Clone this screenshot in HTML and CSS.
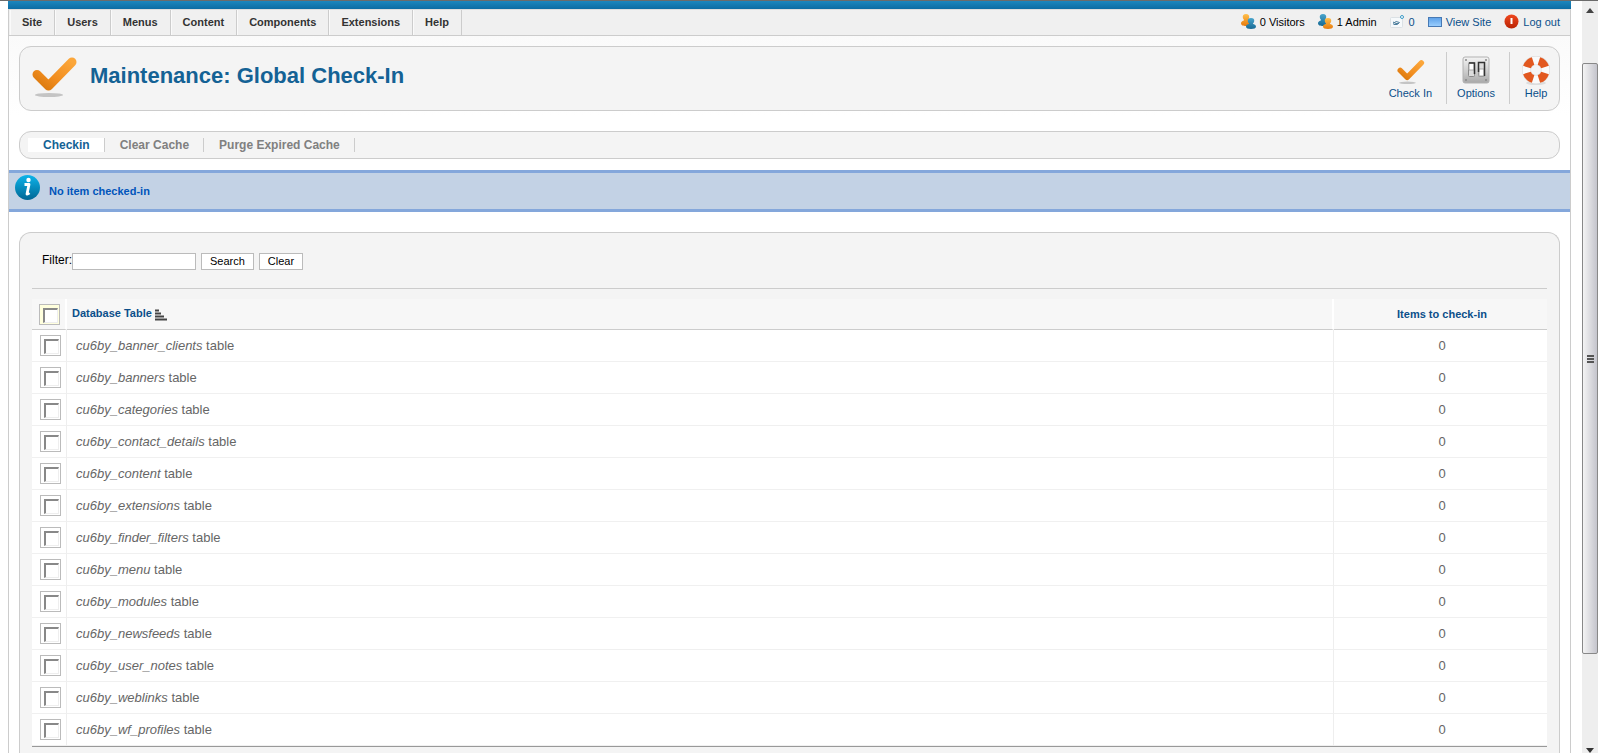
FILE: index.html
```html
<!DOCTYPE html>
<html lang="en">
<head>
  <meta charset="UTF-8">
  <meta name="viewport" content="width=device-width, initial-scale=1.0">
  <title>Maintenance: Global Check-In</title>
  <link rel="stylesheet" href="styles.css">
</head>
<body>

  <!-- Shared icon shapes -->
  <svg class="defs" width="0" height="0" aria-hidden="true">
    <defs>
      <linearGradient id="orange" x1="0" y1="1" x2="1" y2="0">
        <stop offset="0" stop-color="#d9780c"/>
        <stop offset="0.4" stop-color="#f18d1f"/>
        <stop offset="1" stop-color="#fba63a"/>
      </linearGradient>
      <linearGradient id="gold" x1="0" y1="0" x2="0" y2="1">
        <stop offset="0" stop-color="#ffc04d"/>
        <stop offset="1" stop-color="#e87b0c"/>
      </linearGradient>
      <linearGradient id="teal" x1="0" y1="0" x2="0" y2="1">
        <stop offset="0" stop-color="#4aa5cc"/>
        <stop offset="1" stop-color="#176a94"/>
      </linearGradient>
      <linearGradient id="infoBlue" x1="0" y1="0" x2="0" y2="1">
        <stop offset="0" stop-color="#0cb4ea"/>
        <stop offset="1" stop-color="#006694"/>
      </linearGradient>
      <linearGradient id="metal" x1="0" y1="0" x2="0" y2="1">
        <stop offset="0" stop-color="#f4f4f4"/>
        <stop offset="0.6" stop-color="#c9c9c9"/>
        <stop offset="1" stop-color="#a8a8a8"/>
      </linearGradient>
      <linearGradient id="screen" x1="0" y1="0" x2="0" y2="1">
        <stop offset="0" stop-color="#5b9fe8"/>
        <stop offset="1" stop-color="#9dd0ff"/>
      </linearGradient>
      <linearGradient id="red" x1="0" y1="0" x2="0" y2="1">
        <stop offset="0" stop-color="#f0481f"/>
        <stop offset="1" stop-color="#b92304"/>
      </linearGradient>
      <symbol id="check" viewBox="0 0 48 48">
        <ellipse cx="19" cy="41" rx="14" ry="2" fill="#c4c4c4"/>
        <path d="M7 20.500L18.500 32L42 8" fill="none" stroke="url(#orange)" stroke-width="9" stroke-linecap="round" stroke-linejoin="round"/>
      </symbol>
      <symbol id="person" viewBox="0 0 9 12" preserveAspectRatio="none">
        <path d="M4.500 0C6.700 0 7.600 1.400 7.400 3.200C7.300 4.400 6.900 5.200 6.200 5.900C6.200 6.800 9 6.800 9 9.300C9 11.500 7 12 4.500 12S0 11.500 0 9.300C0 6.800 2.800 6.800 2.800 5.900C2.100 5.200 1.700 4.400 1.600 3.200C1.400 1.400 2.300 0 4.500 0Z"/>
      </symbol>
    </defs>
  </svg>

  <div class="page">
    <div class="top-bar"></div>

    <header class="menu-bar">
      <nav class="menu">
        <a href="#">Site</a>
        <a href="#">Users</a>
        <a href="#">Menus</a>
        <a href="#">Content</a>
        <a href="#">Components</a>
        <a href="#">Extensions</a>
        <a href="#">Help</a>
      </nav>
      <div class="status">
        <span>
          <svg width="15" height="15" viewBox="0 0 15 15"><use href="#person" x="0" y="0" width="10" height="12" fill="url(#gold)"/><use href="#person" x="5" y="4" width="10" height="11" fill="url(#teal)"/></svg>
          0 Visitors
        </span>
        <span>
          <svg width="15" height="15" viewBox="0 0 15 15"><use href="#person" x="0" y="0" width="10" height="12" fill="url(#teal)"/><use href="#person" x="5" y="4" width="10" height="11" fill="url(#gold)"/></svg>
          1 Admin
        </span>
        <a href="#">
          <svg width="15" height="15" viewBox="0 0 15 15"><rect x="0.500" y="3.500" width="12" height="10" rx="1" fill="#f6f9fb" stroke="#dbe1e5"/><path d="M3 9.500Q6 6 9.500 8.500Q8 11.500 3.500 10.500M3 8L6 9.500H9" fill="none" stroke="#4e7f9e"/><circle cx="12" cy="3" r="1.500" fill="#fff" stroke="#3c9ac6"/></svg>
          0
        </a>
        <a href="#">
          <svg width="14" height="15" viewBox="0 0 14 15"><rect x="0.500" y="3.500" width="13" height="9" fill="url(#screen)" stroke="#4779b4"/></svg>
          View Site
        </a>
        <a href="#">
          <svg width="15" height="15" viewBox="0 0 15 15"><circle cx="7.500" cy="7.500" r="7" fill="url(#red)"/><path d="M7.500 4V10" stroke="#fff" stroke-width="2"/></svg>
          Log out
        </a>
      </div>
    </header>

    <main>
      <section class="box title-box">
        <svg width="48" height="48"><use href="#check"/></svg>
        <h1>Maintenance: Global Check-In</h1>
        <div class="toolbar">
          <a href="#">
            <svg width="32" height="32" viewBox="0 0 32 32"><use href="#check" x="2" y="4" width="29" height="29"/></svg>
            Check In
          </a>
          <a href="#">
            <svg width="32" height="32" viewBox="0 0 32 32">
              <rect x="3" y="3" width="26" height="26" rx="2" fill="url(#metal)" stroke="#b2b2b2"/>
              <g fill="#888"><circle cx="6" cy="6" r="1"/><circle cx="26" cy="6" r="1"/><circle cx="6" cy="26" r="1"/><circle cx="26" cy="26" r="1"/></g>
              <rect x="8.500" y="8.500" width="6" height="14" rx="1" fill="#ddd" stroke="#888"/>
              <rect x="18.500" y="8.500" width="6" height="14" rx="1" fill="#ddd" stroke="#888"/>
              <path d="M9 16H14V9H9Z" fill="#fff" stroke="#aaa"/>
              <path d="M19 15H24V22H19Z" fill="#fff" stroke="#aaa"/>
              <path d="M9 9H14.500V20M18.500 18V8.500H24.500V22" fill="none" stroke="#333" stroke-width="1.500"/>
            </svg>
            Options
          </a>
          <a href="#">
            <svg width="32" height="32" viewBox="0 0 32 32">
              <ellipse cx="16" cy="29" rx="10" ry="2" fill="#ddd"/>
              <circle cx="16" cy="16" r="9.500" fill="none" stroke="#d5d5d5" stroke-width="9"/>
              <circle cx="16" cy="16" r="9.500" fill="none" stroke="#fafafa" stroke-width="8"/>
              <circle cx="16" cy="16" r="9.500" fill="none" stroke="#e2581f" stroke-width="8" pathLength="80" stroke-dasharray="12 8" stroke-dashoffset="-4"/>
            </svg>
            Help
          </a>
        </div>
      </section>

      <nav class="box submenu">
        <a href="#" class="active">Checkin</a>
        <a href="#">Clear Cache</a>
        <a href="#">Purge Expired Cache</a>
      </nav>

      <div class="message">
        <svg width="25" height="25" viewBox="0 0 25 25"><circle cx="12.500" cy="12.500" r="12.500" fill="url(#infoBlue)"/><circle cx="13.500" cy="5" r="2.200" fill="#fff"/><path d="M9.500 9.500H14L12 19Q12.500 19.500 14.500 18" fill="none" stroke="#fff" stroke-width="2.800" stroke-linejoin="round"/></svg>
        <p>No item checked-in</p>
      </div>

      <form class="box content">
        <div class="filter">
          <label for="filter_search">Filter:</label>
          <input type="text" id="filter_search">
          <button type="button">Search</button>
          <button type="button">Clear</button>
        </div>

        <table class="adminlist">
          <thead>
            <tr>
              <th class="tick"><input type="checkbox" aria-label="Check all"></th>
              <th class="name"><a href="#">Database Table <svg width="12" height="12" viewBox="0 0 12 12"><path d="M0 1.500H4M0 4.500H6M0 7.500H9M0 10.500H12" stroke="#444" stroke-width="2"/></svg></a></th>
              <th class="count"><a href="#">Items to check-in</a></th>
            </tr>
          </thead>
          <tbody>
            <tr><td class="tick"><input type="checkbox" id="cb0"></td><td><label for="cb0"><em>cu6by_banner_clients</em> table</label></td><td class="count">0</td></tr>
            <tr><td class="tick"><input type="checkbox" id="cb1"></td><td><label for="cb1"><em>cu6by_banners</em> table</label></td><td class="count">0</td></tr>
            <tr><td class="tick"><input type="checkbox" id="cb2"></td><td><label for="cb2"><em>cu6by_categories</em> table</label></td><td class="count">0</td></tr>
            <tr><td class="tick"><input type="checkbox" id="cb3"></td><td><label for="cb3"><em>cu6by_contact_details</em> table</label></td><td class="count">0</td></tr>
            <tr><td class="tick"><input type="checkbox" id="cb4"></td><td><label for="cb4"><em>cu6by_content</em> table</label></td><td class="count">0</td></tr>
            <tr><td class="tick"><input type="checkbox" id="cb5"></td><td><label for="cb5"><em>cu6by_extensions</em> table</label></td><td class="count">0</td></tr>
            <tr><td class="tick"><input type="checkbox" id="cb6"></td><td><label for="cb6"><em>cu6by_finder_filters</em> table</label></td><td class="count">0</td></tr>
            <tr><td class="tick"><input type="checkbox" id="cb7"></td><td><label for="cb7"><em>cu6by_menu</em> table</label></td><td class="count">0</td></tr>
            <tr><td class="tick"><input type="checkbox" id="cb8"></td><td><label for="cb8"><em>cu6by_modules</em> table</label></td><td class="count">0</td></tr>
            <tr><td class="tick"><input type="checkbox" id="cb9"></td><td><label for="cb9"><em>cu6by_newsfeeds</em> table</label></td><td class="count">0</td></tr>
            <tr><td class="tick"><input type="checkbox" id="cb10"></td><td><label for="cb10"><em>cu6by_user_notes</em> table</label></td><td class="count">0</td></tr>
            <tr><td class="tick"><input type="checkbox" id="cb11"></td><td><label for="cb11"><em>cu6by_weblinks</em> table</label></td><td class="count">0</td></tr>
            <tr><td class="tick"><input type="checkbox" id="cb12"></td><td><label for="cb12"><em>cu6by_wf_profiles</em> table</label></td><td class="count">0</td></tr>
          </tbody>
        </table>
      </form>
    </main>
  </div>

  <!-- Window scrollbar -->
  <div class="scrollbar" aria-hidden="true">
    <svg width="8" height="5" viewBox="0 0 8 5"><path d="M4 0L8 5H0Z" fill="#444"/></svg>
    <div class="scroll-track"><div class="scroll-thumb"><i></i><i></i><i></i></div></div>
    <svg width="8" height="5" viewBox="0 0 8 5"><path d="M0 0H8L4 5Z" fill="#333"/></svg>
  </div>

</body>
</html>
```

FILE: styles.css
```css
* {
  box-sizing: border-box;
  margin: 0;
  padding: 0;
}

body {
  display: flex;
  height: 100vh;
  overflow: hidden;
  border-top: 1px solid #6b6b6b;
  padding-left: 8px;
  background: #fff;
  color: #000;
  font-family: "Liberation Sans", Arial, Helvetica, sans-serif;
  font-size: 11px;
}

a {
  color: #0b4f8a;
  text-decoration: none;
}

svg {
  flex-shrink: 0;
}

.defs {
  position: absolute;
}

.page {
  flex: 1;
  min-width: 0;
}

.top-bar {
  height: 8px;
  background: linear-gradient(#1c86bd, #0c6ca3);
}

/* Main menu and status */
.menu-bar {
  display: flex;
  justify-content: space-between;
  height: 27px;
  border: 1px solid #ccc;
  border-top-color: #ddd;
  background: #f0f0f0;
}

.menu {
  display: flex;
  padding-left: 1px;
}

.menu a {
  padding: 0 12px;
  border-right: 1px solid #ccc;
  box-shadow: inset 1px 0 #fafafa;
  color: #333;
  font-weight: bold;
  line-height: 24px;
}

.status {
  display: flex;
  align-items: center;
  gap: 13px;
  padding: 0 10px 2px 0;
}

.status span,
.status a {
  display: flex;
  align-items: center;
  gap: 4px;
}

main {
  border: solid #ccc;
  border-width: 0 1px;
  background: linear-gradient(#fafafa, #fff 80px);
  padding-top: 10px;
}

.box {
  margin: 0 10px;
  border: 1px solid #ccc;
  border-radius: 12px;
  background: #f4f4f4;
}

/* Page title and toolbar */
.title-box {
  display: flex;
  align-items: center;
  height: 65px;
  padding: 0 0 2px 10px;
}

.title-box h1 {
  flex: 1;
  padding: 0 0 4px 12px;
  color: #146295;
  font-size: 22px;
}

.toolbar {
  display: flex;
}

.toolbar a {
  display: flex;
  flex-direction: column;
  align-items: center;
  height: 52px;
  padding: 2px 14px 0 10px;
  border-right: 1px solid #ccc;
  line-height: 14px;
}

.toolbar a:last-child {
  padding-right: 7px;
  border-right: 0;
}

.submenu {
  display: flex;
  margin-top: 20px;
  padding: 6px 8px;
}

.submenu a {
  padding: 0 14px 0 15px;
  border-right: 1px solid #ccc;
  color: #808080;
  font-size: 12px;
  font-weight: bold;
  line-height: 14px;
}

.submenu .active {
  background: #fff;
  color: #146295;
}

/* System message */
.message {
  display: flex;
  gap: 9px;
  height: 42px;
  margin: 11px 0 20px;
  padding: 2px 6px;
  border: solid #84a7db;
  border-width: 3px 0;
  background: #c3d2e5;
  color: #05b;
  font-weight: bold;
  line-height: 32px;
}

.content {
  padding: 20px 12px 30px;
  border-bottom: 0;
  border-radius: 12px 12px 0 0;
}

.filter {
  display: flex;
  height: 36px;
  padding-left: 10px;
  border-bottom: 1px solid #ccc;
}

.filter label {
  font-size: 12px;
  line-height: 14px;
}

.filter input,
.filter button {
  height: 17px;
  border: 1px solid #bbb;
  background: #fff;
  font: 11px "Liberation Sans", Arial, sans-serif;
}

.filter input {
  width: 124px;
}

.filter button {
  margin-left: 5px;
  padding: 0 8px 1px;
}

/* Table list */
.adminlist {
  width: 100%;
  margin-top: 10px;
  border-collapse: separate;
  border-spacing: 0;
  border-bottom: 1px solid #999;
  background: #fff;
  color: #666;
  font-size: 13px;
}

.adminlist th {
  height: 31px;
  border-right: 2px solid #fff;
  border-bottom: 1px solid #ccc;
  background: #f7f7f7;
  font-size: 11px;
}

.adminlist td {
  height: 32px;
  padding-left: 9px;
  border-right: 1px solid #eee;
  border-bottom: 1px solid #f0f0f0;
}

.adminlist th:last-child,
.adminlist td:last-child {
  border-right: 0;
}

.adminlist .name {
  padding-left: 5px;
  text-align: left;
}

.name svg {
  vertical-align: -4px;
}

.adminlist .tick {
  width: 35px;
  padding: 0 5px 0 8px;
}

.adminlist .count {
  width: 213px;
  padding: 0 0 0 3px;
  text-align: center;
}

.tick input {
  display: block;
  appearance: none;
  width: 21px;
  height: 21px;
  padding: 3px;
  border: 1px solid #bbb;
  background: #fff;
}

.tick input::before {
  content: "";
  display: block;
  width: 12px;
  height: 12px;
  border: solid #888;
  border-width: 2px 1px 1px 2px;
  border-right-color: #eee;
  border-bottom-color: #eee;
  background: #fff;
}

th.tick input {
  margin-left: -1px;
  background: #ffffdd;
}

/* Scrollbar */
.scrollbar {
  display: flex;
  flex-direction: column;
  align-items: center;
  width: 16px;
  margin-left: 11px;
  padding-top: 7px;
  background: #eee;
}

.scroll-track {
  flex: 1;
  width: 100%;
  padding: 50px 0 94px;
}

.scroll-thumb {
  display: flex;
  flex-direction: column;
  align-items: center;
  justify-content: center;
  gap: 1px;
  height: 100%;
  border: 1px solid #888;
  border-radius: 2px;
  background: linear-gradient(90deg, #f4f4f4, #dcdce0 50%, #c4c4cc);
}

.scroll-thumb i {
  width: 7px;
  height: 2px;
  background: #555;
}
```
